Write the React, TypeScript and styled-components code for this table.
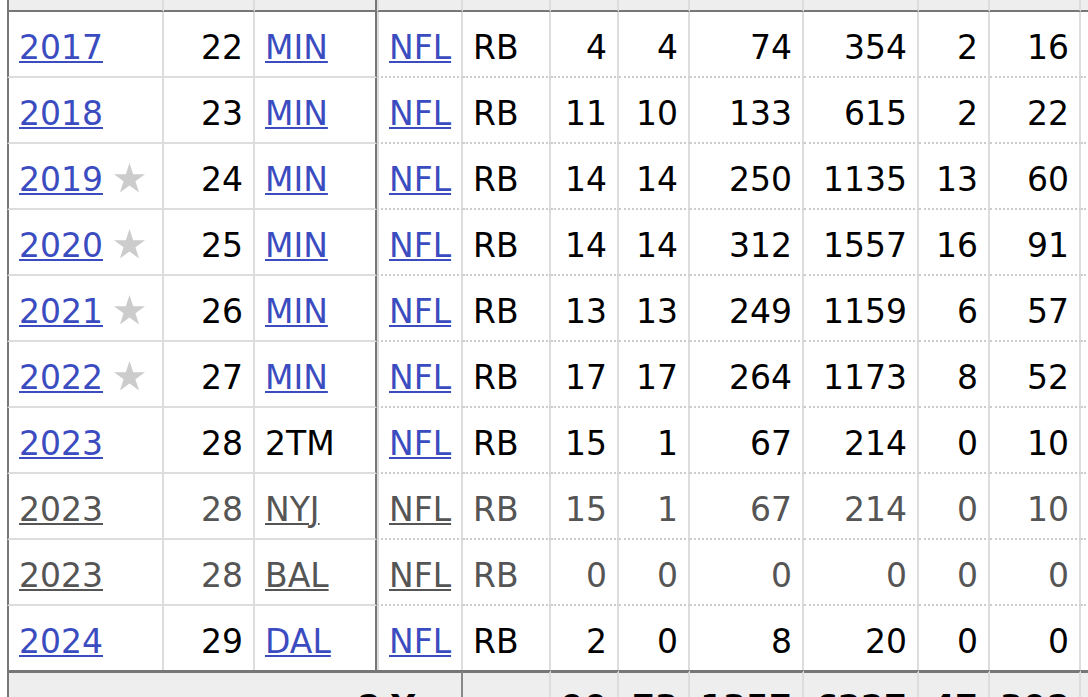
import React from "react";
import styled, { createGlobalStyle, css } from "styled-components";

const Global = createGlobalStyle`
  html, body {
    margin: 0;
    padding: 0;
    overflow: hidden;
    background: #ffffff;
  }
  body {
    font-family: "DejaVu Sans", Verdana, sans-serif;
  }
`;

const COLS = "157px 91px 122px 86px 88px 68px 71px 114px 115px 71px 91px 100px";

type Edge = "first" | "divider" | "afterDivider" | "none";

const Page = styled.div`
  padding-left: 7px;
`;

const Table = styled.div`
  display: flex;
  flex-direction: column;
  width: max-content;
`;

const Row = styled.div`
  display: grid;
  grid-template-columns: ${COLS};
`;

const edgeBorders = (edge: Edge, rightColor?: string) => css`
  border-left: ${edge === "first"
    ? "2px solid #777"
    : edge === "afterDivider"
    ? "2px solid #ddd"
    : "none"};
  border-right: 2px solid ${rightColor ?? (edge === "divider" ? "#777" : "#ddd")};
`;

const HeadCell = styled.div<{ $edge: Edge }>`
  box-sizing: border-box;
  height: 12px;
  background: #eeeeee;
  border-bottom: 2px solid #777;
  ${(p) => edgeBorders(p.$edge)}
`;

const Cell = styled.div<{
  $edge: Edge;
  $align: "left" | "right";
  $frozen: boolean;
  $muted: boolean;
  $last: boolean;
}>`
  box-sizing: border-box;
  height: ${(p) => (p.$last ? 64 : 66)}px;
  padding: 17px 10px 0;
  font-size: 33px;
  line-height: 38px;
  white-space: nowrap;
  overflow: hidden;
  background: #ffffff;
  text-align: ${(p) => p.$align};
  color: ${(p) => (p.$muted ? "#555555" : "#000000")};
  ${(p) => edgeBorders(p.$edge)}
  border-bottom: ${(p) =>
    p.$last ? "none" : p.$frozen ? "2px solid #dddddd" : "2px dotted #cccccc"};
`;

const FootCell = styled.div<{ $edge: Edge; $span?: number; $rightColor?: string }>`
  box-sizing: border-box;
  height: 60px;
  padding: 16px 10px 0;
  font-size: 33px;
  line-height: 38px;
  font-weight: bold;
  white-space: nowrap;
  overflow: hidden;
  text-align: right;
  color: #000;
  background: #eeeeee;
  border-top: 3px solid #777;
  grid-column: span ${(p) => p.$span ?? 1};
  ${(p) => edgeBorders(p.$edge, p.$rightColor)}
`;

const Link = styled.a<{ $muted: boolean }>`
  color: ${(p) => (p.$muted ? "#555555" : "#3b4cc0")};
  text-decoration: underline;
  text-decoration-thickness: 2px;
  text-underline-offset: 2px;
  cursor: pointer;
`;

const Star = styled.svg`
  width: 31px;
  height: 29.5px;
  margin-left: 11px;
  vertical-align: -1px;
`;

type Season = {
  year: string;
  star?: boolean;
  age: string;
  team: string;
  teamLink: boolean;
  muted?: boolean;
  stats: string[];
};

const seasons: Season[] = [
  { year: "2017", age: "22", team: "MIN", teamLink: true, stats: ["4", "4", "74", "354", "2", "16"] },
  { year: "2018", age: "23", team: "MIN", teamLink: true, stats: ["11", "10", "133", "615", "2", "22"] },
  { year: "2019", star: true, age: "24", team: "MIN", teamLink: true, stats: ["14", "14", "250", "1135", "13", "60"] },
  { year: "2020", star: true, age: "25", team: "MIN", teamLink: true, stats: ["14", "14", "312", "1557", "16", "91"] },
  { year: "2021", star: true, age: "26", team: "MIN", teamLink: true, stats: ["13", "13", "249", "1159", "6", "57"] },
  { year: "2022", star: true, age: "27", team: "MIN", teamLink: true, stats: ["17", "17", "264", "1173", "8", "52"] },
  { year: "2023", age: "28", team: "2TM", teamLink: false, stats: ["15", "1", "67", "214", "0", "10"] },
  { year: "2023", age: "28", team: "NYJ", teamLink: true, muted: true, stats: ["15", "1", "67", "214", "0", "10"] },
  { year: "2023", age: "28", team: "BAL", teamLink: true, muted: true, stats: ["0", "0", "0", "0", "0", "0"] },
  { year: "2024", age: "29", team: "DAL", teamLink: true, stats: ["2", "0", "8", "20", "0", "0"] },
];

const totals = ["90", "73", "1357", "6227", "47", "308"];

const columnEdges: Edge[] = [
  "first",
  "none",
  "divider",
  "afterDivider",
  "none",
  "none",
  "none",
  "none",
  "none",
  "none",
  "none",
  "none",
];

const StarIcon = () => (
  <Star viewBox="0 0 31 29.5" aria-label="Pro Bowl">
    <polygon
      fill="#cccccc"
      points="15.5,0 19.16,11.26 31,11.26 21.43,18.23 25.08,29.49 15.5,22.53 5.92,29.49 9.57,18.23 0,11.26 11.84,11.26"
    />
  </Star>
);

export default function App() {
  return (
    <>
      <Global />
      <Page>
        <Table role="table">
          <Row role="row">
            {columnEdges.map((edge, i) => (
              <HeadCell key={i} $edge={edge} role="columnheader" />
            ))}
          </Row>
          {seasons.map((s, r) => {
            const last = r === seasons.length - 1;
            const muted = !!s.muted;
            const common = { $muted: muted, $last: last };
            return (
              <Row role="row" key={r}>
                <Cell $edge="first" $align="left" $frozen {...common}>
                  <Link $muted={muted}>{s.year}</Link>
                  {s.star && <StarIcon />}
                </Cell>
                <Cell $edge="none" $align="right" $frozen {...common}>
                  {s.age}
                </Cell>
                <Cell $edge="divider" $align="left" $frozen {...common}>
                  {s.teamLink ? <Link $muted={muted}>{s.team}</Link> : s.team}
                </Cell>
                <Cell $edge="afterDivider" $align="left" $frozen={false} {...common}>
                  <Link $muted={muted}>NFL</Link>
                </Cell>
                <Cell $edge="none" $align="left" $frozen={false} {...common}>
                  RB
                </Cell>
                {s.stats.map((v, i) => (
                  <Cell key={i} $edge="none" $align="right" $frozen={false} {...common}>
                    {v}
                  </Cell>
                ))}
                <Cell $edge="none" $align="right" $frozen={false} {...common} />
              </Row>
            );
          })}
          <Row role="row">
            <FootCell $edge="first" $span={4} $rightColor="#888">
              8 Yrs
            </FootCell>
            <FootCell $edge="none" />
            {totals.map((v, i) => (
              <FootCell key={i} $edge="none">
                {v}
              </FootCell>
            ))}
            <FootCell $edge="none" />
          </Row>
        </Table>
      </Page>
    </>
  );
}
